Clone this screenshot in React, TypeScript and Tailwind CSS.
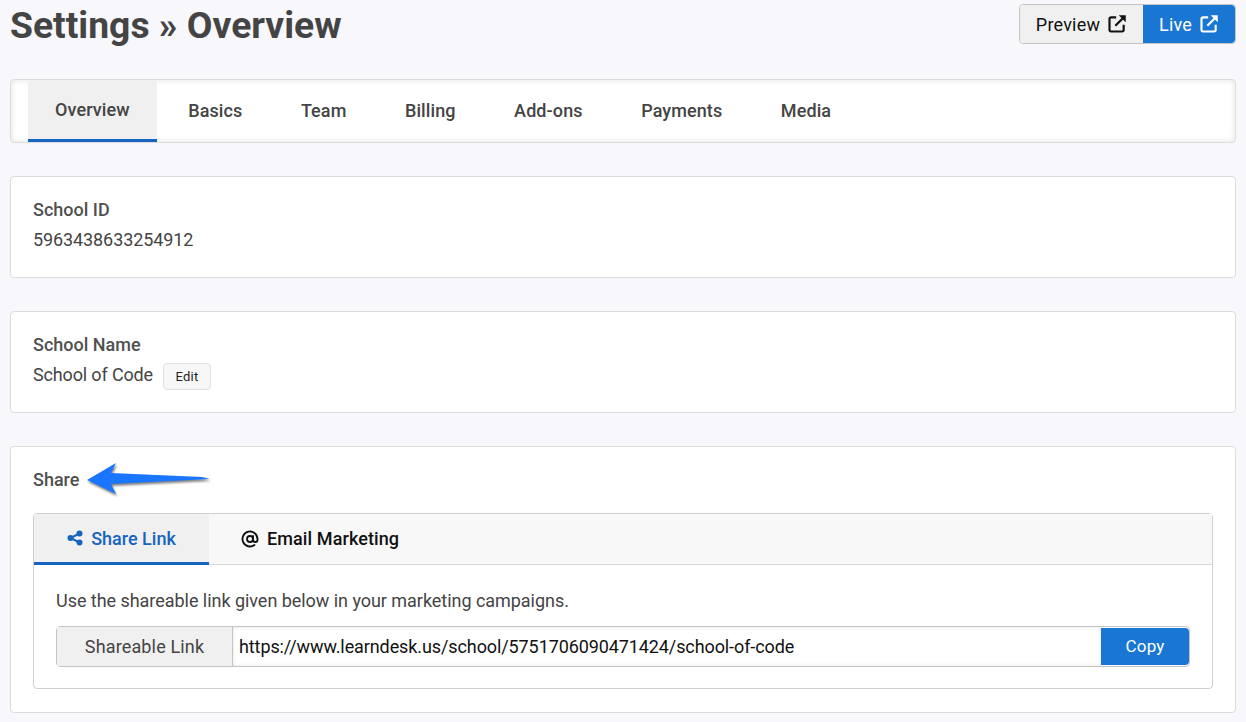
import { AtSign } from "lucide-react";

const tabs = ["Overview", "Basics", "Team", "Billing", "Add-ons", "Payments", "Media"];

function LinkOutIcon() {
  return (
    <svg width="20" height="20" viewBox="0 0 24 24" fill="none" stroke="currentColor" strokeWidth="2.6">
      <path d="M11 4H5a2 2 0 0 0-2 2v13a2 2 0 0 0 2 2h13a2 2 0 0 0 2-2v-6" />
      <path d="M10 14 19 5" />
      <path d="M14 1.5H22.5V10Z" fill="currentColor" stroke="none" />
    </svg>
  );
}

function ShareIcon() {
  return (
    <svg width="16" height="16" viewBox="0 0 16 16" fill="#1565c0" stroke="#1565c0">
      <path d="M12.5 3.5 3.5 8l9 4.5" fill="none" strokeWidth="2" />
      <circle cx="12.5" cy="3.5" r="3" stroke="none" />
      <circle cx="3.5" cy="8" r="3" stroke="none" />
      <circle cx="12.5" cy="12.5" r="3" stroke="none" />
    </svg>
  );
}

function ShareArrow() {
  return (
    <svg
      className="absolute left-[65px] top-[14px] drop-shadow-[1px_2px_1px_rgba(0,0,0,0.5)]"
      width="136"
      height="36"
      viewBox="0 0 136 36"
    >
      <path d="M11 19 L40 2 L35 12 L126 16 L134 18 L35 23 L40 33 Z" fill="#1a75ff" />
    </svg>
  );
}

export default function App() {
  return (
    <div className="h-[722px] overflow-hidden bg-[#f7f7fc] px-[10px] font-['Roboto',sans-serif] text-[#444]">
      <div className="flex h-[79px] items-start justify-between">
        <h1 className="text-[37.3px] leading-[50px] font-bold">Settings » Overview</h1>
        <div className="mt-1 flex h-10 rounded border border-[#c4c4c4] text-[18px] tracking-[0.2px]">
          <button className="flex w-[123px] items-center justify-center gap-[7px] rounded-l bg-[#f0f0f0] text-[#111]">
            Preview <LinkOutIcon />
          </button>
          <button className="flex w-[92px] items-center justify-center gap-[7px] rounded-r bg-[#1976d2] text-white">
            Live <LinkOutIcon />
          </button>
        </div>
      </div>

      <nav className="flex h-[64px] gap-[4.5px] rounded border border-[#dcdcdc] bg-white pl-[17px] shadow-[inset_0_0_6px_rgba(0,0,0,0.12)]">
        {tabs.map((t, i) => (
          <a
            key={t}
            className={
              "flex items-center px-[27px] pb-px text-[18px] font-medium tracking-[0.1px] " +
              (i === 0 ? "mt-px h-[61px] border-b-[3px] border-[#1565c0] bg-[#f0f0f0]" : "")
            }
          >
            {t}
          </a>
        ))}
      </nav>

      <section className="mt-[33px] h-[102px] rounded border border-[#dcdcdc] bg-white px-[22px] pt-[23px]">
        <div className="text-[18px] leading-5 font-medium text-[#505050]">School ID</div>
        <div className="mt-[10px] text-[18px] leading-5 tracking-[-0.1px]">5963438633254912</div>
      </section>

      <section className="mt-[33px] h-[102px] rounded border border-[#dcdcdc] bg-white px-[22px] pt-[23px]">
        <div className="text-[18px] leading-5 font-medium text-[#505050]">School Name</div>
        <div className="mt-[10px] flex items-start gap-[10px] text-[18px] leading-5 tracking-[-0.15px]">
          School of Code
          <button className="-mt-[2px] h-[27px] w-[48px] rounded border border-[#e0e0e0] bg-[#f7f7f7] text-[13px] tracking-[0.2px] text-[#222]">Edit</button>
        </div>
      </section>

      <section className="relative mt-[33px] h-[267px] rounded border border-[#dcdcdc] bg-white px-[22px] pt-[23px]">
        <div className="text-[18px] leading-5 font-medium text-[#505050]">Share</div>
        <ShareArrow />
        <div className="mt-[23px] h-[176px] rounded border border-[#cfcfcf]">
          <div className="flex h-[51px] border-b border-[#d9d9d9] bg-[#f8f8f8] text-[18px] font-medium">
            <a className="-mb-px flex w-[175px] items-center justify-center gap-2 border-b-[3px] border-[#1565c0] bg-[#f0f0f0] text-[#1565c0]">
              <ShareIcon /> Share Link
            </a>
            <a className="ml-8 flex items-center gap-[8px] pb-px tracking-[0.1px] text-[#111]">
              <AtSign size={18} strokeWidth={2.5} /> Email Marketing
            </a>
          </div>
          <div className="px-[22px] pt-[26px]">
            <p className="text-[18px] leading-5 tracking-[-0.04px]">Use the shareable link given below in your marketing campaigns.</p>
            <div className="mt-[15px] flex h-[41px] rounded border border-[#c4c4c4]">
              <span className="flex w-[176px] items-center justify-center border-r border-[#c4c4c4] bg-[#f0f0f0] text-[18px] tracking-[0.15px]">Shareable Link</span>
              <span className="flex flex-1 items-center px-[6px] text-[18px] tracking-[-0.1px] text-[#111] shadow-[inset_0_0_4px_rgba(0,0,0,0.1)]">https://www.learndesk.us/school/5751706090471424/school-of-code</span>
              <button className="my-px w-[88px] rounded-r bg-[#1976d2] text-[17px] tracking-[0.2px] text-white">Copy</button>
            </div>
          </div>
        </div>
      </section>
    </div>
  );
}
